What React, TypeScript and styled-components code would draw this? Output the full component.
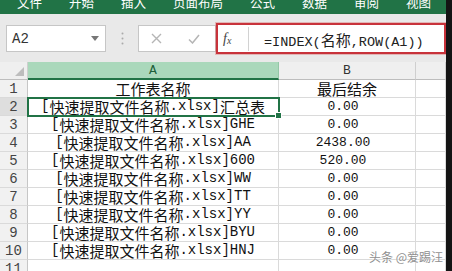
import React from "react";
import styled, { createGlobalStyle } from "styled-components";

const GlobalStyle = createGlobalStyle`
  html, body {
    margin: 0;
    padding: 0;
    background: #fff;
  }
  body {
    font-family: "Noto Sans CJK SC", sans-serif;
  }
`;

const Window = styled.div`
  position: relative;
  width: 452px;
  height: 271px;
  box-sizing: border-box;
  border-right: 6px solid #141414;
  overflow: hidden;
  display: flex;
  flex-direction: column;
  background: #fff;
`;

const Ribbon = styled.div`
  flex: none;
  height: 14px;
  display: flex;
  gap: 27px;
  padding-left: 17px;
  background: #217346;
  overflow: hidden;
`;

const Tab = styled.span`
  margin-top: -3px;
  line-height: 12px;
  font-size: 12.5px;
  color: #fff;
  white-space: nowrap;
`;

const FormulaBar = styled.div`
  flex: none;
  height: 48px;
  box-sizing: border-box;
  display: flex;
  align-items: flex-start;
  padding: 11px 0 0 6px;
  background: #e9e9e9;
`;

const NameBox = styled.div`
  width: 100px;
  height: 27px;
  box-sizing: border-box;
  display: flex;
  align-items: center;
  justify-content: space-between;
  padding: 0 6px 0 5px;
  background: #fff;
  border: 1px solid #c6c6c6;
  font-family: "Liberation Mono", monospace;
  font-size: 14px;
  color: #333;
`;

const Grip = styled.div`
  width: 32px;
  height: 27px;
  display: flex;
  align-items: center;
  justify-content: center;
`;

const EditButtons = styled.div`
  width: 78px;
  height: 27px;
  box-sizing: border-box;
  display: flex;
  align-items: center;
  gap: 26px;
  padding-left: 12px;
  background: #fff;
  border: 1px solid #c6c6c6;
`;

const FormulaBox = styled.div`
  flex: 1;
  height: 31px;
  margin-top: -2px;
  box-sizing: border-box;
  display: flex;
  align-items: center;
  background: #fff;
  border: 2px solid #c8333b;
  box-shadow: 0 0 0 1px rgba(214, 90, 90, 0.35);
`;

const FxCell = styled.div`
  width: 30px;
  padding-left: 5px;
  box-sizing: border-box;
  font-family: "Liberation Serif", serif;
  font-style: italic;
  font-size: 14px;
  color: #444;
  & sub {
    font-size: 10px;
    vertical-align: -1px;
  }
`;

const Divider = styled.div`
  width: 1px;
  height: 24px;
  background: #d2d2d2;
`;

const FormulaText = styled.div`
  padding-left: 15px;
  color: #222;
  white-space: nowrap;
`;

const Sheet = styled.div`
  display: grid;
  grid-template-columns: 28px 251px 137px 30px;
  grid-auto-rows: 18px;
`;

const Corner = styled.div`
  box-sizing: border-box;
  display: flex;
  align-items: flex-end;
  justify-content: flex-end;
  padding: 0 3px 3px 0;
  background: #efefef;
  border-right: 1px solid #cfcfcf;
  border-bottom: 1px solid #bdbdbd;
`;

const ColHead = styled.div<{ $selected?: boolean }>`
  box-sizing: border-box;
  display: flex;
  align-items: center;
  justify-content: center;
  font-family: "Liberation Mono", monospace;
  font-size: 13px;
  color: ${(p) => (p.$selected ? "#1d5f39" : "#333")};
  background: ${(p) => (p.$selected ? "#aad8bb" : "#efefef")};
  border-right: 1px solid ${(p) => (p.$selected ? "#94c7a7" : "#cfcfcf")};
  border-bottom: ${(p) => (p.$selected ? "2px solid #217346" : "1px solid #bdbdbd")};
`;

const RowHead = styled.div<{ $active?: boolean }>`
  box-sizing: border-box;
  display: flex;
  align-items: center;
  justify-content: center;
  font-family: "Liberation Mono", monospace;
  font-size: 14px;
  color: #444;
  background: ${(p) => (p.$active ? "#dedede" : "#f1f1f1")};
  border-right: 1px solid #c6c6c6;
  border-bottom: 1px solid #dadada;
`;

const Cell = styled.div<{ $active?: boolean; $shift?: number }>`
  position: ${(p) => (p.$active ? "relative" : "static")};
  z-index: ${(p) => (p.$active ? 1 : "auto")};
  box-sizing: border-box;
  display: flex;
  align-items: center;
  justify-content: center;
  padding-right: ${(p) => p.$shift ?? 0}px;
  line-height: 17px;
  color: #111;
  white-space: nowrap;
  border-right: 1px solid #dadada;
  border-bottom: 1px solid #dadada;
  outline: ${(p) => (p.$active ? "2px solid #217346" : "none")};
  outline-offset: -1px;

  &::after {
    content: "";
    display: ${(p) => (p.$active ? "block" : "none")};
    position: absolute;
    right: -4px;
    bottom: -4px;
    width: 5px;
    height: 5px;
    background: #217346;
    border: 1px solid #fff;
  }
`;

const Run = styled.span<{ $cjk: boolean; $latin: number }>`
  font-family: ${(p) => (p.$cjk ? '"Noto Sans CJK SC", sans-serif' : '"Liberation Mono", monospace')};
  font-size: ${(p) => (p.$cjk ? 15 : p.$latin)}px;
`;

const Watermark = styled.div`
  position: absolute;
  right: 3px;
  bottom: 6px;
  font-size: 12px;
  color: #8f8f8f;
  text-shadow: 0 0 2px #fff, 0 0 1px #fff;
  white-space: nowrap;
`;

const CJK = /[\u3400-\u9fff]/;

function Mixed({ text, latin = 14 }: { text: string; latin?: number }) {
  const parts = text.match(/[\u3400-\u9fff]+|[^\u3400-\u9fff]+/g) ?? [];
  return (
    <>
      {parts.map((t, i) => (
        <Run key={i} $cjk={CJK.test(t)} $latin={latin}>
          {t}
        </Run>
      ))}
    </>
  );
}

const tabs = ["文件", "开始", "插入", "页面布局", "公式", "数据", "审阅", "视图"];

const prefix = "[快速提取文件名称.xlsx]";
const rows: [string, string][] = [
  ["工作表名称", "最后结余"],
  [prefix + "汇总表", "0.00"],
  [prefix + "GHE", "0.00"],
  [prefix + "AA", "2438.00"],
  [prefix + "600", "520.00"],
  [prefix + "WW", "0.00"],
  [prefix + "TT", "0.00"],
  [prefix + "YY", "0.00"],
  [prefix + "BYU", "0.00"],
  [prefix + "HNJ", "0.00"],
  ["", ""],
];

const App: React.FC = () => {
  return (
    <Window>
      <GlobalStyle />
      <Ribbon>
        {tabs.map((t) => (
          <Tab key={t}>{t}</Tab>
        ))}
      </Ribbon>

      <FormulaBar>
        <NameBox>
          A2
          <svg width="8" height="5" viewBox="0 0 8 5">
            <polygon points="0,0 8,0 4,5" fill="#777" />
          </svg>
        </NameBox>
        <Grip>
          <svg width="3" height="13" viewBox="0 0 3 13">
            <circle cx="1.5" cy="1.5" r="1" fill="#aaa" />
            <circle cx="1.5" cy="6.5" r="1" fill="#aaa" />
            <circle cx="1.5" cy="11.5" r="1" fill="#aaa" />
          </svg>
        </Grip>
        <EditButtons>
          <svg width="11" height="11" viewBox="0 0 11 11">
            <path d="M1 1 L10 10 M10 1 L1 10" stroke="#b5b5b5" strokeWidth="1.4" fill="none" />
          </svg>
          <svg width="12" height="10" viewBox="0 0 12 10">
            <path d="M1 5.5 L4.5 9 L11 1" stroke="#b5b5b5" strokeWidth="1.5" fill="none" />
          </svg>
        </EditButtons>
        <FormulaBox>
          <FxCell>
            f<sub>x</sub>
          </FxCell>
          <Divider />
          <FormulaText>
            <Mixed text="=INDEX(名称,ROW(A1))" latin={13.5} />
          </FormulaText>
        </FormulaBox>
      </FormulaBar>

      <Sheet>
        <Corner>
          <svg width="9" height="9" viewBox="0 0 9 9">
            <polygon points="9,0 9,9 0,9" fill="#bdbdbd" />
          </svg>
        </Corner>
        <ColHead $selected>A</ColHead>
        <ColHead>B</ColHead>
        <ColHead />
        {rows.map(([a, b], i) => (
          <React.Fragment key={i}>
            <RowHead $active={i === 1}>{i + 1}</RowHead>
            <Cell $active={i === 1}>
              <Mixed text={a} />
            </Cell>
            <Cell $shift={i === 0 ? 0 : 8}>
              <Mixed text={b} latin={13} />
            </Cell>
            <Cell />
          </React.Fragment>
        ))}
      </Sheet>

      <Watermark>头条 @爱踢汪</Watermark>
    </Window>
  );
};

export default App;
